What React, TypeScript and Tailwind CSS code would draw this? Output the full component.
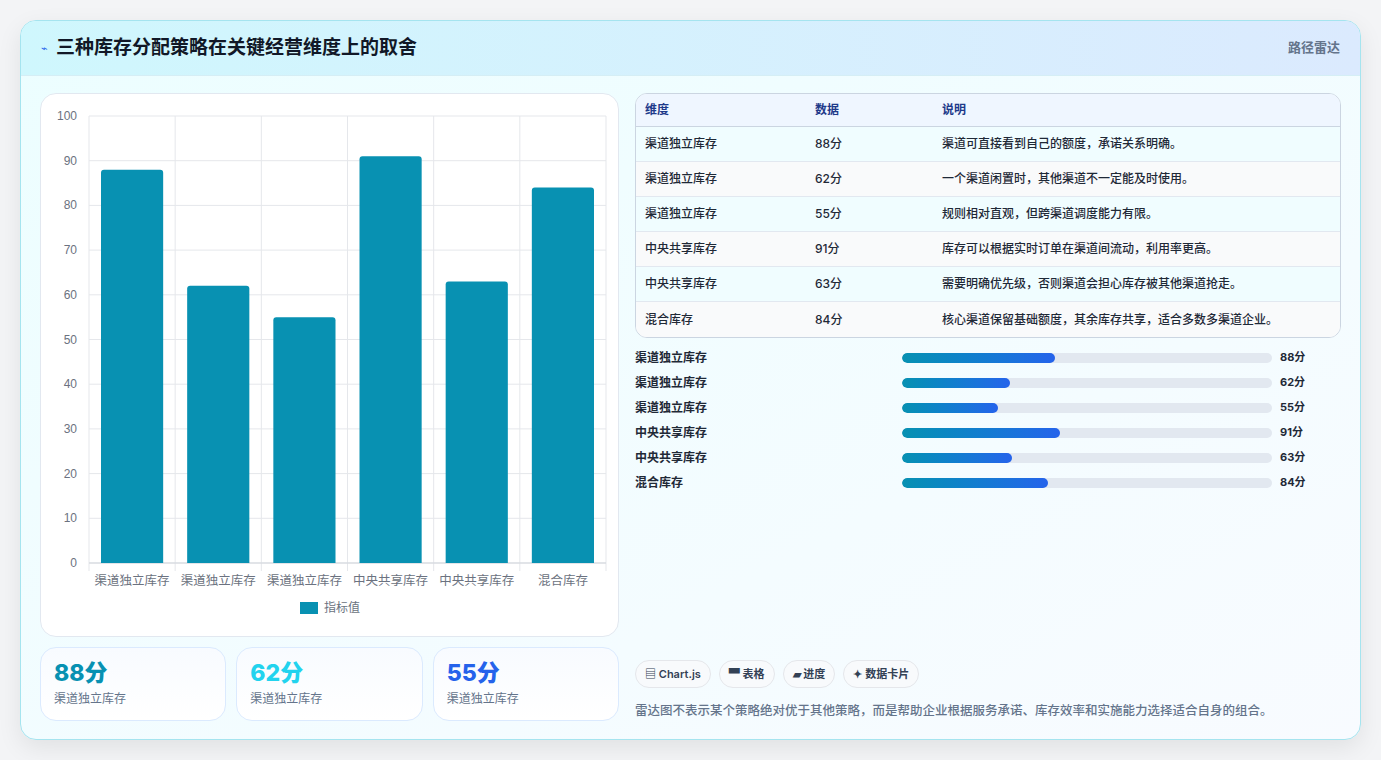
import React from "react";

const rows = [
  ["渠道独立库存", 88, "渠道可直接看到自己的额度，承诺关系明确。"],
  ["渠道独立库存", 62, "一个渠道闲置时，其他渠道不一定能及时使用。"],
  ["渠道独立库存", 55, "规则相对直观，但跨渠道调度能力有限。"],
  ["中央共享库存", 91, "库存可以根据实时订单在渠道间流动，利用率更高。"],
  ["中央共享库存", 63, "需要明确优先级，否则渠道会担心库存被其他渠道抢走。"],
  ["混合库存", 84, "核心渠道保留基础额度，其余库存共享，适合多数多渠道企业。"],
] as const;

function Chart() {
  const L = 48, R = 565, T = 22, B = 469;
  const h = B - T;
  const cw = (R - L) / 6;
  return (
    <svg width="578" height="543" className="block">
      {Array.from({ length: 11 }).map((_, i) => {
        const y = B - (h * i) / 10;
        return (
          <g key={i}>
            <line x1={L} x2={R} y1={y} y2={y} stroke="#e5e7eb" />
            <text x={L - 12} y={y + 4} textAnchor="end" fontSize="12" fill="#6b7280" fontFamily="Liberation Sans, sans-serif">{i * 10}</text>
          </g>
        );
      })}
      {Array.from({ length: 7 }).map((_, i) => (
        <line key={i} x1={L + cw * i} x2={L + cw * i} y1={T} y2={B + 8} stroke="#e5e7eb" />
      ))}
      <line x1={L} x2={R} y1={B} y2={B} stroke="#d1d5db" />
      {rows.map((r, i) => {
        const v = r[1] as number;
        const bh = (h * v) / 100;
        return (
          <g key={i}>
            <path d={`M${L + cw * i + 12} ${B} V${B - bh + 3} q0 -3 3 -3 H${L + cw * i + cw - 15} q3 0 3 3 V${B} Z`} fill="#0891b2" />
            <text x={L + cw * i + cw / 2} y={B + 22} textAnchor="middle" fontSize="12.5" fill="#6b7280" fontFamily="Noto Sans CJK SC, sans-serif">{r[0]}</text>
          </g>
        );
      })}
      <rect x="259" y="508" width="18" height="12" fill="#0891b2" />
      <text x="283" y="518" fontSize="12" fill="#6b7280" fontFamily="Noto Sans CJK SC, sans-serif">指标值</text>
    </svg>
  );
}

export default function App() {
  return (
    <div className="w-[1381px] h-[760px] bg-[#f3f4f6] p-5 pb-[20px]" style={{ fontFamily: "Inter, 'Noto Sans CJK SC', sans-serif" }}>
      <div className="h-[720px] rounded-2xl border border-[#a5e4ef] bg-gradient-to-br from-[#ecfeff] to-[#f8fbff] overflow-hidden shadow-[0_8px_24px_rgba(0,0,0,0.08)] flex flex-col">
        <div className="h-[55px] shrink-0 flex items-center justify-between px-5 bg-gradient-to-r from-[#cff7fd] to-[#dbeafe] border-b border-[#d5eef5]">
          <div className="flex items-center gap-2">
            <span className="text-[#2563eb] text-[11px]">⌁</span>
            <span className="text-[19px] font-bold text-[#111827]">三种库存分配策略在关键经营维度上的取舍</span>
          </div>
          <span className="text-[13px] font-semibold text-[#64748b]">路径雷达</span>
        </div>
        <div className="flex-1 flex gap-4 px-[19px] pt-[17px] pb-[18px]">
          <div className="w-[579px] flex flex-col gap-[10px]">
            <div className="h-[544px] rounded-2xl border border-[#e2e8f0] bg-white overflow-hidden">
              <Chart />
            </div>
            <div className="grid grid-cols-3 gap-[10px] flex-1">
              {[["88分", "text-[#0891b2]"], ["62分", "text-[#22d3ee]"], ["55分", "text-[#2563eb]"]].map(([v, c], i) => (
                <div key={i} className="rounded-2xl border border-[#dbeafe] bg-gradient-to-b from-[#f8fbff] to-white px-[13px] pt-[10px]">
                  <div className={`text-[23px] font-extrabold leading-[30px] ${c}`}>{v}</div>
                  <div className="text-[12px] text-[#64748b] mt-[2px]">渠道独立库存</div>
                </div>
              ))}
            </div>
          </div>
          <div className="flex-1 flex flex-col">
            <div className="rounded-xl border border-[#cbd5e1] overflow-hidden bg-white text-[12px]">
              <div className="grid grid-cols-[170px_127px_1fr] h-[33px] items-center px-[9px] bg-[#eff6ff] border-b border-[#cbd5e1] text-[#1e3a8a] font-semibold">
                <span>维度</span><span>数据</span><span>说明</span>
              </div>
              {rows.map((r, i) => (
                <div key={i} className={`grid grid-cols-[170px_127px_1fr] h-[35px] items-center px-[9px] text-[#1f2937] font-medium ${i < 5 ? "border-b border-[#e2e8f0]" : ""} ${i % 2 === 0 ? "bg-[#f0fdff]" : "bg-[#f9fafb]"}`}>
                  <span>{r[0]}</span><span>{r[1]}分</span><span>{r[2]}</span>
                </div>
              ))}
            </div>
            <div className="flex flex-col mt-[7px]">
              {rows.map((r, i) => (
                <div key={i} className="h-[25px] flex items-center text-[12px] font-semibold text-[#1f2937]">
                  <span className="w-[267px]">{r[0]}</span>
                  <div className="w-[370px] h-[10px] rounded-full bg-[#e2e8f0] overflow-hidden">
                    <div className="h-full rounded-full bg-gradient-to-r from-[#0891b2] to-[#2563eb]" style={{ width: `${(r[1] as number) * 0.47}%` }} />
                  </div>
                  <span className="ml-2 text-[11px] font-bold">{r[1]}分</span>
                </div>
              ))}
            </div>
            <div className="mt-auto flex gap-2 text-[11px] font-semibold text-[#334155]">
              {["▤ Chart.js", "▀ 表格", "▰ 进度", "✦ 数据卡片"].map((t) => (
                <span key={t} className="h-[28px] px-[9px] flex items-center rounded-full border border-[#e5e7eb] bg-[#f8fafc]">{t}</span>
              ))}
            </div>
            <div className="mt-[14px] text-[12.5px] text-[#64748b] font-medium">雷达图不表示某个策略绝对优于其他策略，而是帮助企业根据服务承诺、库存效率和实施能力选择适合自身的组合。</div>
          </div>
        </div>
      </div>
    </div>
  );
}
